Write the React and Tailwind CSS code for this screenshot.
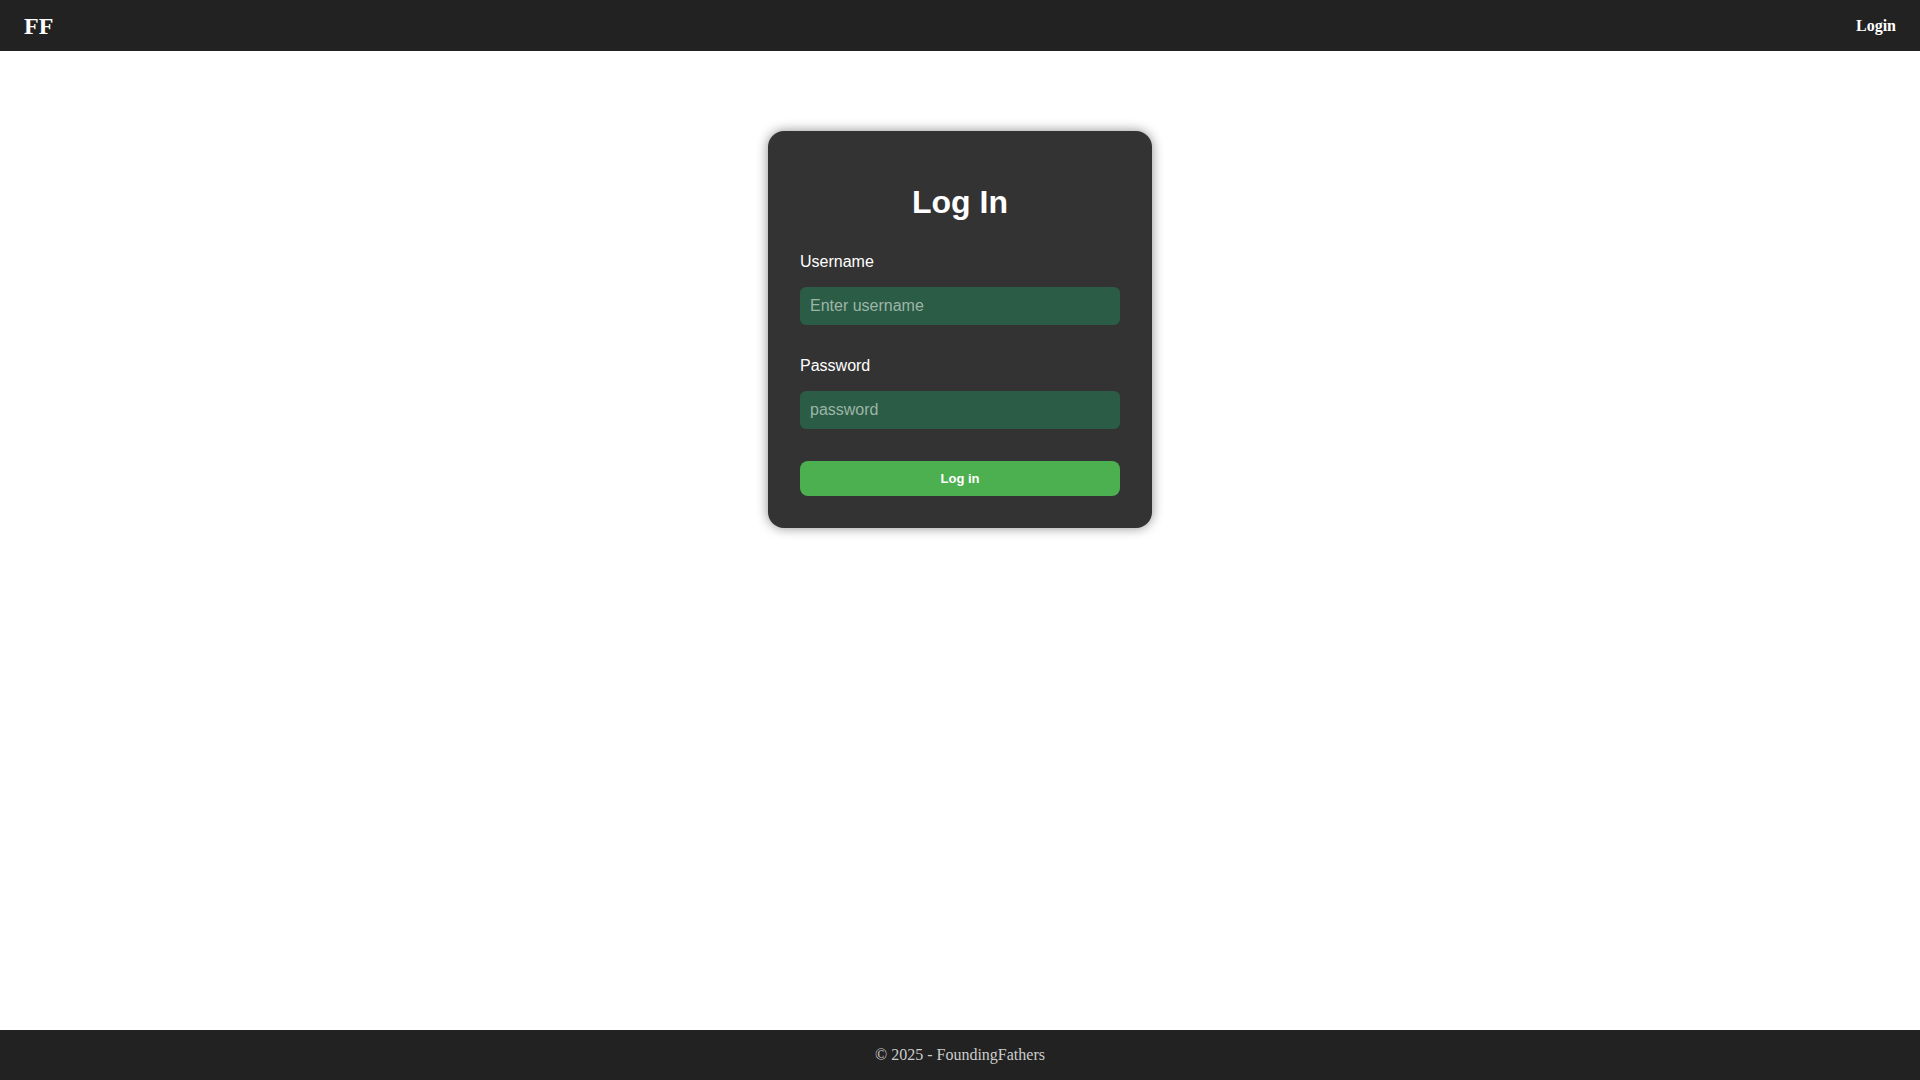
import React from 'react';

const serif = { fontFamily: '"Liberation Serif", "Times New Roman", serif' };
const sans = { fontFamily: '"Liberation Sans", Arial, sans-serif' };

export default function App() {
  return (
    <div className="min-h-screen flex flex-col bg-white" style={serif}>
      {/* Header */}
      <header className="h-[51px] bg-[#222222] flex items-center justify-between px-6 text-white">
        <span className="text-2xl font-bold">FF</span>
        <a href="#" className="text-base font-bold text-white">Login</a>
      </header>

      {/* Main */}
      <main className="flex-1 flex justify-center pt-[80px]">
        <div
          className="w-[384px] h-[397px] bg-[#333333] rounded-2xl p-8 text-white shadow-[0_0_12px_rgba(0,0,0,0.45)]"
          style={sans}
        >
          <h1 className="text-[32px] font-bold text-center leading-[37px] mt-[21px] mb-[32px]">Log In</h1>

          <label className="block text-base leading-[18px] mb-[16px]">Username</label>
          <input
            type="text"
            placeholder="Enter username"
            className="block w-full h-[38px] rounded-md bg-[#2b5c45] px-[10px] text-base text-white placeholder:text-[#9db5a8] outline-none"
          />

          <label className="block text-base leading-[18px] mt-[32px] mb-[16px]">Password</label>
          <input
            type="password"
            placeholder="password"
            className="block w-full h-[38px] rounded-md bg-[#2b5c45] px-[10px] text-base text-white placeholder:text-[#9db5a8] outline-none"
          />

          <button className="mt-[32px] w-full h-[35px] rounded-lg bg-[#4caf50] text-[13px] font-bold text-white">
            Log in
          </button>
        </div>
      </main>

      {/* Footer */}
      <footer className="h-[50px] bg-[#222222] flex items-center justify-center text-base text-[#cccccc]">
        © 2025 - FoundingFathers
      </footer>
    </div>
  );
}
